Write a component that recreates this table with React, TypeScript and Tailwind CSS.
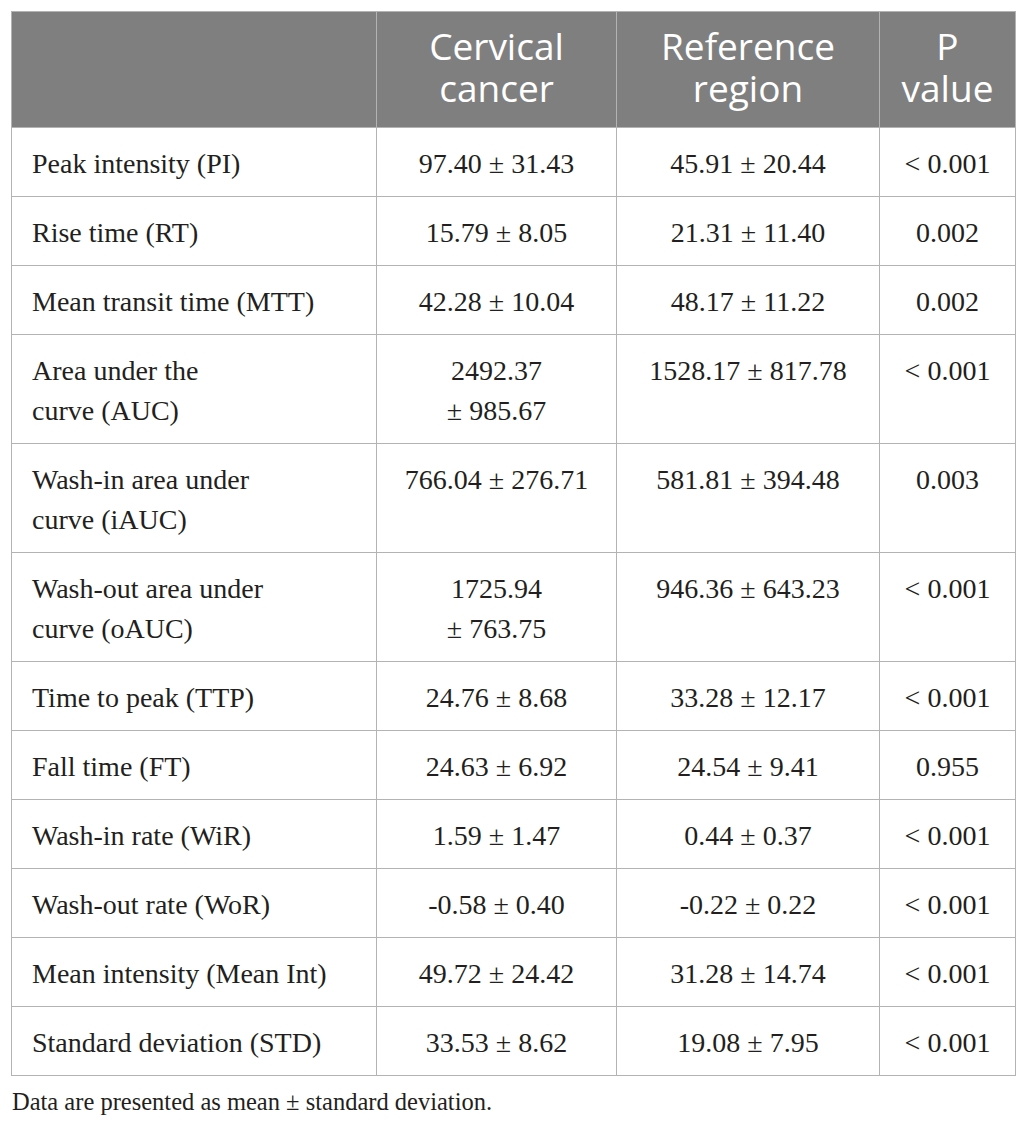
// Table of perfusion parameters: cervical cancer vs reference region,
// grey header band, serif body cells, footnote below.

type Row = {
  label: React.ReactNode;
  cancer: React.ReactNode;
  reference: React.ReactNode;
  p: string;
};

const ROWS: Row[] = [
  { label: "Peak intensity (PI)", cancer: "97.40 ± 31.43", reference: "45.91 ± 20.44", p: "< 0.001" },
  { label: "Rise time (RT)", cancer: "15.79 ± 8.05", reference: "21.31 ± 11.40", p: "0.002" },
  { label: "Mean transit time (MTT)", cancer: "42.28 ± 10.04", reference: "48.17 ± 11.22", p: "0.002" },
  {
    label: (
      <>
        Area under the
        <br />
        curve (AUC)
      </>
    ),
    cancer: (
      <>
        2492.37
        <br />± 985.67
      </>
    ),
    reference: "1528.17 ± 817.78",
    p: "< 0.001",
  },
  {
    label: (
      <>
        Wash-in area under
        <br />
        curve (iAUC)
      </>
    ),
    cancer: "766.04 ± 276.71",
    reference: "581.81 ± 394.48",
    p: "0.003",
  },
  {
    label: (
      <>
        Wash-out area under
        <br />
        curve (oAUC)
      </>
    ),
    cancer: (
      <>
        1725.94
        <br />± 763.75
      </>
    ),
    reference: "946.36 ± 643.23",
    p: "< 0.001",
  },
  { label: "Time to peak (TTP)", cancer: "24.76 ± 8.68", reference: "33.28 ± 12.17", p: "< 0.001" },
  { label: "Fall time (FT)", cancer: "24.63 ± 6.92", reference: "24.54 ± 9.41", p: "0.955" },
  { label: "Wash-in rate (WiR)", cancer: "1.59 ± 1.47", reference: "0.44 ± 0.37", p: "< 0.001" },
  { label: "Wash-out rate (WoR)", cancer: "-0.58 ± 0.40", reference: "-0.22 ± 0.22", p: "< 0.001" },
  { label: "Mean intensity (Mean Int)", cancer: "49.72 ± 24.42", reference: "31.28 ± 14.74", p: "< 0.001" },
  { label: "Standard deviation (STD)", cancer: "33.53 ± 8.62", reference: "19.08 ± 7.95", p: "< 0.001" },
];

const th =
  "border border-[#b3b3b3] bg-[#7f7f7f] text-white font-normal text-center align-top pt-[13px] pb-[18px] px-[8px] text-[37px] leading-[42px]";
const td =
  "border border-[#b3b3b3] align-top pt-[16px] pb-[12px] px-[20px] text-[28px] leading-[40px] whitespace-nowrap";

export default function App() {
  return (
    <div className="w-[1026px] h-[1128px] bg-white pt-[11px] pl-[11px]">
      <table className="border-collapse table-fixed w-[1004px] text-[#231f20] font-['Liberation_Serif',serif]">
        <colgroup>
          <col className="w-[365px]" />
          <col className="w-[240px]" />
          <col className="w-[263px]" />
          <col className="w-[136px]" />
        </colgroup>
        <thead className="font-['Open_Sans',sans-serif]">
          <tr>
            <th className={th}></th>
            <th className={th}>
              Cervical
              <br />
              cancer
            </th>
            <th className={th}>
              Reference
              <br />
              region
            </th>
            <th className={th}>
              P
              <br />
              value
            </th>
          </tr>
        </thead>
        <tbody>
          {ROWS.map((r, i) => (
            <tr key={i}>
              <td className={`${td} text-left`}>{r.label}</td>
              <td className={`${td} text-center`}>{r.cancer}</td>
              <td className={`${td} text-center`}>{r.reference}</td>
              <td className={`${td} text-center`}>{r.p}</td>
            </tr>
          ))}
        </tbody>
      </table>
      <p className="mt-[10px] pl-px text-[24.5px] leading-[32px] text-[#231f20] font-['Liberation_Serif',serif]">
        Data are presented as mean ± standard deviation.
      </p>
    </div>
  );
}
